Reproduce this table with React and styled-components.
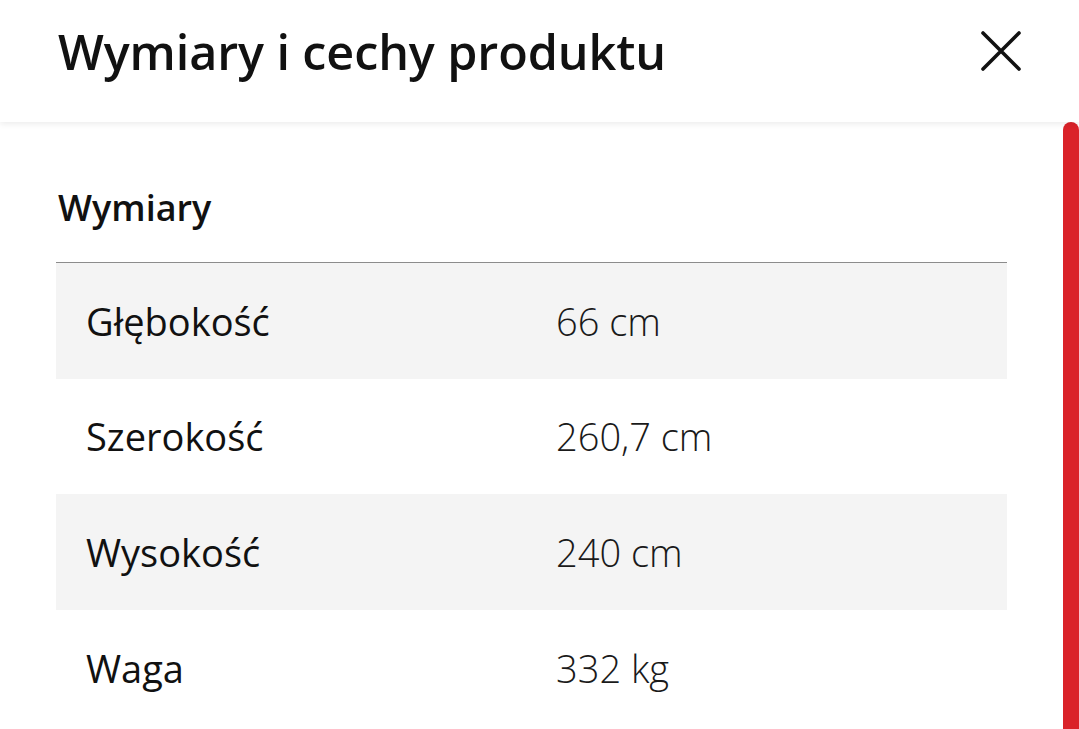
import React from "react";
import styled, { createGlobalStyle } from "styled-components";

const GlobalStyle = createGlobalStyle`
  html, body {
    margin: 0;
    padding: 0;
    background: #ffffff;
    overflow: hidden;
  }
  body {
    font-family: "Open Sans", "Noto Sans", sans-serif;
    color: #111111;
  }
`;

const Page = styled.div`
  display: flex;
  flex-direction: column;
  height: 729px;
  width: 1079px;
  overflow: hidden;
`;

const Header = styled.header`
  position: relative;
  z-index: 2;
  height: 122px;
  flex-shrink: 0;
  display: flex;
  align-items: center;
  justify-content: space-between;
  padding: 0 56px 0 58px;
  background: #ffffff;
  box-shadow: 0 2px 6px rgba(0, 0, 0, 0.08);
  box-sizing: border-box;
`;

const Title = styled.h1`
  margin: 0 0 20px 0;
  font-size: 48.5px;
  font-weight: 600;
  letter-spacing: -0.1px;
  color: #111111;
`;

const CloseButton = styled.button`
  border: none;
  background: none;
  padding: 0;
  margin: 0 0 20px 0;
  width: 44px;
  height: 44px;
  display: flex;
  align-items: center;
  justify-content: center;
  cursor: pointer;
`;

const Body = styled.div`
  flex: 1;
  display: flex;
  min-height: 0;
`;

const Content = styled.main`
  flex: 1;
  padding: 0 56px 0 56px;
`;

const Scrollbar = styled.div`
  width: 16px;
  display: flex;
`;

const Thumb = styled.div`
  flex: 1;
  background: #da2229;
  border-radius: 8px 8px 0 0;
`;

const SectionTitle = styled.h2`
  margin: 0;
  padding: 62px 0 30px 2px;
  font-size: 36px;
  font-weight: 600;
  line-height: 48px;
  color: #111111;
`;

const Table = styled.div`
  border-top: 1px solid #8c8c8c;
`;

const Row = styled.div`
  display: grid;
  grid-template-columns: 470px 1fr;
  align-items: center;
  height: 115.6px;
  padding-left: 30px;
  background: ${(p) => (p.$shaded ? "#f4f4f4" : "#ffffff")};
`;

const Label = styled.span`
  font-size: 38px;
  font-weight: 400;
  color: #111111;
`;

const Value = styled.span`
  font-size: 38px;
  font-weight: 300;
  color: #1a1a1a;
`;

const rows = [
  ["Głębokość", "66 cm"],
  ["Szerokość", "260,7 cm"],
  ["Wysokość", "240 cm"],
  ["Waga", "332 kg"],
];

export default function App() {
  return (
    <Page>
      <GlobalStyle />
      <Header>
        <Title>Wymiary i cechy produktu</Title>
        <CloseButton aria-label="Zamknij">
          <svg width="40" height="40" viewBox="0 0 40 40">
            <path d="M2 2 L38 38 M38 2 L2 38" stroke="#111" strokeWidth="3.6" strokeLinecap="round" />
          </svg>
        </CloseButton>
      </Header>
      <Body>
        <Content>
          <SectionTitle>Wymiary</SectionTitle>
          <Table>
            {rows.map(([label, value], i) => (
              <Row key={label} $shaded={i % 2 === 0}>
                <Label>{label}</Label>
                <Value>{value}</Value>
              </Row>
            ))}
          </Table>
        </Content>
        <Scrollbar>
          <Thumb />
        </Scrollbar>
      </Body>
    </Page>
  );
}
